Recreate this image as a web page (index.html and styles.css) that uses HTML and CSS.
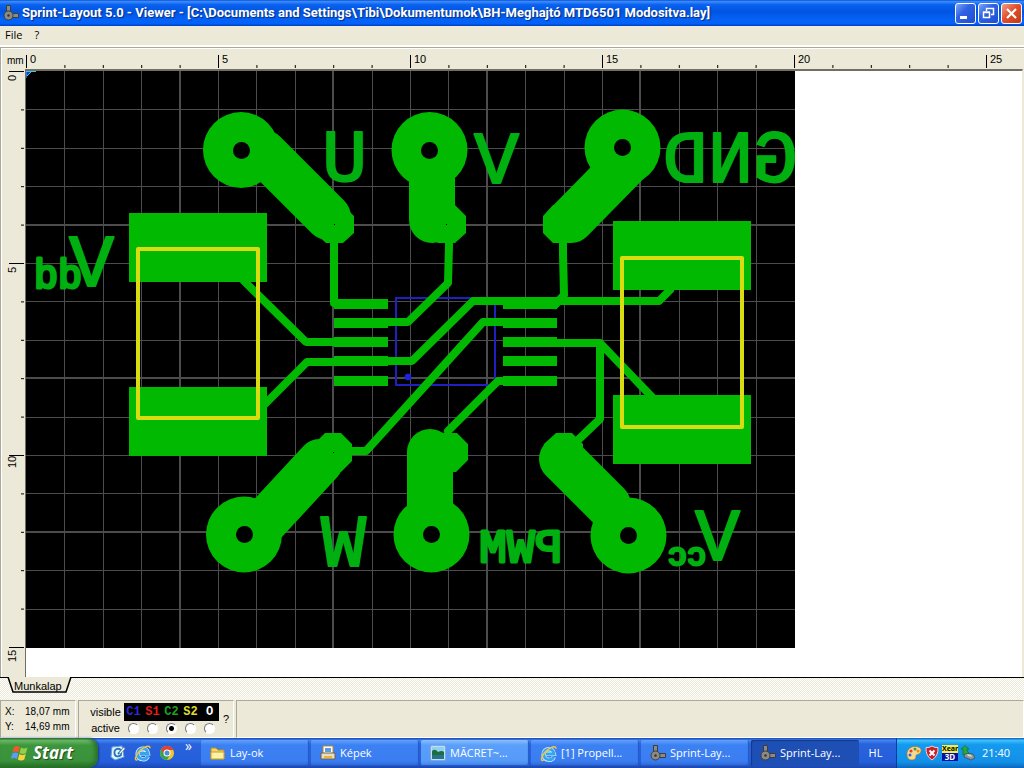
FILE: index.html
```
<!DOCTYPE html>
<html lang="hu">

<head>
    <meta charset="UTF-8">
    <meta name="viewport" content="width=device-width, initial-scale=1.0">
    <title>Sprint-Layout 5.0 - Viewer</title>
    <link rel="stylesheet" href="styles.css">
</head>

<body>

    <svg class="defs" width="0" height="0">
        <symbol id="sprint" viewBox="0 0 16 16">
            <path d="M8 8.500h7.500v4H8z" fill="#8b8b85" stroke="#3d3d3d" />
            <path d="M3.500.5h4V8h-4z" fill="#8b8b85" stroke="#3d3d3d" />
            <circle cx="5.500" cy="10.500" r="4.500" fill="#8b8b85" stroke="#3d3d3d" />
            <circle cx="5.500" cy="10.500" r="1.200" fill="#333" />
        </symbol>
        <symbol id="ie" viewBox="0 0 18 18">
            <path d="M14.500 12.500C13 17 4.500 17 3.800 10 3.500 3.500 13.500 1.500 14.800 9.500H6" fill="none" stroke="#d9f1ff" stroke-width="4.500" />
            <path d="M14.500 12.500C13 17 4.500 17 3.800 10 3.500 3.500 13.500 1.500 14.800 9.500H6" fill="none" stroke="#35a5ee" stroke-width="3" />
            <path d="M4 16C0 18 1 12 6 7s11-7 11-3" fill="none" stroke="#f2c446" stroke-width="1.600" />
        </symbol>
    </svg>

    <header class="titlebar">
        <svg class="app-icon" width="16" height="16"><use href="#sprint" /></svg>
        <h1>Sprint-Layout 5.0 - Viewer - [C:\Documents and Settings\Tibi\Dokumentumok\BH-Meghajtó MTD6501 Modositva.lay]</h1>
        <div class="win-btns">
            <button class="win-btn" aria-label="Minimize"><svg width="19" height="19"><path d="M4 12h7v3H4z" fill="#fff" /></svg></button>
            <button class="win-btn" aria-label="Restore"><svg width="19" height="19"><path d="M7.500 7V4.500h7v6H12M7 4.500h8M4.500 8.500h6v5h-6zM4 8h7" fill="none" stroke="#fff" stroke-width="1.500" /></svg></button>
            <button class="win-btn close" aria-label="Close"><svg width="19" height="19"><path d="M5 5l9 9M14 5l-9 9" stroke="#fff" stroke-width="2.200" /></svg></button>
        </div>
    </header>

    <nav class="menubar">
        <button>File</button>
        <button>?</button>
    </nav>

    <main class="workspace">
        <div class="ruler-top">
            <span class="unit">mm</span>
            <svg class="ruler-x" height="23">
                <defs>
                    <pattern id="tickX" width="38.400" height="23" patternUnits="userSpaceOnUse">
                        <path d="M0 17h1v3H0z" />
                    </pattern>
                    <pattern id="majorX" width="192" height="23" patternUnits="userSpaceOnUse">
                        <path d="M0 7h1v13H0z" />
                    </pattern>
                </defs>
                <rect width="100%" height="23" fill="url(#tickX)" />
                <rect width="100%" height="23" fill="url(#majorX)" />
                <text x="4" y="15">0</text>
                <text x="196" y="15">5</text>
                <text x="388" y="15">10</text>
                <text x="580" y="15">15</text>
                <text x="772" y="15">20</text>
                <text x="964" y="15">25</text>
            </svg>
        </div>
        <div class="sheet-row">
            <svg class="ruler-y" width="24">
                <defs>
                    <pattern id="tickY" width="24" height="38.400" patternUnits="userSpaceOnUse">
                        <path d="M20 0h3v1h-3z" />
                    </pattern>
                    <pattern id="majorY" width="24" height="192" patternUnits="userSpaceOnUse">
                        <path d="M8 0h15v1H8z" />
                    </pattern>
                </defs>
                <rect width="24" height="100%" fill="url(#tickY)" />
                <rect width="24" height="100%" fill="url(#majorY)" />
                <text transform="translate(15 10) rotate(-90)">0</text>
                <text transform="translate(15 202) rotate(-90)">5</text>
                <text transform="translate(15 397) rotate(-90)">10</text>
                <text transform="translate(15 591) rotate(-90)">15</text>
            </svg>
            <div class="canvas">
                <svg class="board" width="769" height="577" viewBox="26 71 769 577">
                    <rect x="26" y="71" width="769" height="577" fill="#000" />

                    <!-- grid, every fourth line is heavier -->
                    <g class="grid">
                        <path d="M64.500 71v577M103.500 71v577M141.500 71v577M218.500 71v577M256.500 71v577M295.500 71v577M372.500 71v577M410.500 71v577M448.500 71v577M525.500 71v577M564.500 71v577M602.500 71v577M679.500 71v577M717.500 71v577M756.500 71v577" />
                        <path d="M26 109.500h769M26 148.500h769M26 186.500h769M26 263.500h769M26 301.500h769M26 340.500h769M26 417.500h769M26 455.500h769M26 493.500h769M26 570.500h769M26 609.500h769" />
                        <path class="heavy" d="M180 71v577M333 71v577M487 71v577M640 71v577M26 225h769M26 378h769M26 532h769" />
                    </g>

                    <!-- S1 -->
                    <g class="silk-blue">
                        <rect x="396" y="298" width="99" height="87" />
                        <circle cx="408" cy="377" r="3" />
                    </g>

                    <!-- C2 pads -->
                    <g class="copper">
                        <circle cx="241" cy="150" r="38" />
                        <circle cx="429.500" cy="150" r="38" />
                        <circle cx="622.500" cy="147.500" r="38" />
                        <circle cx="244" cy="534.500" r="38" />
                        <circle cx="431.500" cy="534.500" r="38" />
                        <circle cx="628.500" cy="535.500" r="38" />
                        <path d="M326 205h17l11 11v17l-11 10h-17l-11-10v-17zM438 205h17l11 11v17l-11 10h-17l-11-10v-17zM553 205h18l11 11v17l-11 10h-18l-10-10v-17zM325 433h16l11 11v17l-11 11h-16l-11-11v-17zM440 433h17l11 11v16l-12 12h-16l-11-11v-17zM556 433h16l11 11v17l-11 11h-16l-12-11v-17z" />
                        <path d="M129 213h138v69H129zM129 387h138v69H129zM613 221h138v69H613zM613 395h138v69H613z" />
                        <path d="M334 299h54v10h-54zM334 318h54v10h-54zM334 337h54v10h-54zM334 356h54v10h-54zM334 376h54v10h-54z" />
                        <path d="M503 299h54v10h-54zM503 318h54v10h-54zM503 337h54v10h-54zM503 356h54v10h-54zM503 376h54v10h-54z" />
                    </g>

                    <!-- C2 tracks -->
                    <g class="track wide">
                        <path d="M264 153l64 64M432 150v70M625 165l-54 55M258 529l62-67M430 534v-82M562 459l46 46" />
                    </g>
                    <g class="track">
                        <path d="M334 230v73h20M449 235v10l-1 38-40 39h-20M563 235v20l1 40-9 10" />
                        <path d="M388 361h24l61-60h186l11-11M334 342h-28l-62-61M334 362h-27l-42 42" />
                        <path d="M503 322h-20L366 451h-16M557 343h43l52 54M600 345v74l-23 22M503 381h-5l-50 50" />
                    </g>
                    <g class="holes">
                        <circle cx="241.500" cy="150.500" r="8.500" />
                        <circle cx="429.500" cy="150.500" r="8.500" />
                        <circle cx="622.500" cy="147.500" r="8.500" />
                        <circle cx="244.500" cy="534.500" r="8.500" />
                        <circle cx="431.500" cy="534.500" r="8.500" />
                        <circle cx="628.500" cy="535.500" r="8.500" />
                        <path d="M334 224h1v1h-1zM446 224h1v1h-1zM333 452h1v1h-1z" />
                    </g>

                    <!-- captions on the bottom side read mirrored -->
                    <g class="caption">
                        <text transform="translate(367 181) scale(-1 1)">U</text>
                        <text transform="translate(519 183) scale(-1 1)">V</text>
                        <text transform="translate(798 182) scale(-1 1)">GND</text>
                        <text transform="translate(114 286) scale(-1 1)">V</text>
                        <text class="sub" transform="translate(82 288) scale(-1 1)">dd</text>
                        <text transform="translate(366 566) scale(-1 1)">W</text>
                        <text class="pwm" transform="translate(562 562) scale(-1 1)">PWM</text>
                        <text transform="translate(740 560) scale(-1 1)">V</text>
                        <text class="sub-c" transform="translate(706 565) scale(-1 1)">cc</text>
                    </g>

                    <!-- S2 -->
                    <g class="silk-yellow">
                        <rect x="138" y="249" width="120" height="169" />
                        <rect x="622" y="258" width="120" height="169" />
                    </g>
                    <path d="M26 71h6l-6 6z" fill="#1a3fd0" />
                    <path d="M26 78v-6.500h10M27 76l5-5" fill="none" stroke="#39c8ee" />
                </svg>
            </div>
        </div>
    </main>

    <div class="tabs">
        <button class="tab">
            <svg class="tab-shape" width="66" height="18"><path d="M1 0l5 15h53l5-15" fill="#ece9d8" stroke="#000" stroke-width="1.500" /></svg>
            <span>Munkalap</span>
        </button>
    </div>

    <footer class="status">
        <dl class="panel coords">
            <dt>X:</dt>
            <dd>18,07 mm</dd>
            <dt>Y:</dt>
            <dd>14,69 mm</dd>
        </dl>
        <div class="panel layers">
            <div class="layer-rows">
                <div class="layer-row">
                    <span class="caption-cell">visible</span>
                    <div class="layer-names">
                        <button class="c1">C1</button>
                        <button class="s1">S1</button>
                        <button class="c2">C2</button>
                        <button class="s2">S2</button>
                        <button class="o">O</button>
                    </div>
                </div>
                <div class="layer-row">
                    <span class="caption-cell">active</span>
                    <div class="layer-radios">
                        <input type="radio" name="layer" aria-label="C1">
                        <input type="radio" name="layer" aria-label="S1">
                        <input type="radio" name="layer" aria-label="C2" checked>
                        <input type="radio" name="layer" aria-label="S2">
                        <input type="radio" name="layer" aria-label="O">
                    </div>
                </div>
            </div>
            <button class="help">?</button>
        </div>
        <div class="panel rest"></div>
    </footer>

    <div class="taskbar">
        <button class="start">
            <svg width="20" height="20" viewBox="0 0 20 20">
                <path d="M4 4q3-2 6 0L8.500 9.500q-3-2-6 0z" fill="#f05a28" />
                <path d="M11 4.500q3 2 6.500 0L16 10q-3 2-6.500 0z" fill="#8fd14a" />
                <path d="M2.300 10.500q3-2 6 0L7 16q-3-2-6.200 0z" fill="#5c9cf5" />
                <path d="M9.300 11q3 2 6.500 0l-1.500 5.500q-3 2-6.500 0z" fill="#fbd13c" />
            </svg>
            <span>Start</span>
        </button>
        <div class="quick">
            <button aria-label="Desktop">
                <svg width="16" height="18" viewBox="0 0 16 18"><path d="M2 3l10-1 2 11-9 3-4-3z" fill="#e8f4fc" stroke="#5fa5d8" /><path d="M11 6C7 3 4 6 4.500 9.500S9 13 11 11V7l-3 3" fill="none" stroke="#2478c0" stroke-width="1.800" /><path d="M9 9l5-6 1 2-5 5z" fill="#fff" stroke="#666" stroke-width=".5" /></svg>
            </button>
            <button aria-label="Internet Explorer"><svg width="17" height="18"><use href="#ie" /></svg></button>
            <button aria-label="Chrome">
                <svg width="16" height="18" viewBox="0 0 16 18"><circle cx="8" cy="9" r="7" fill="#f4c62c" /><path d="M2 5.500A7 7 0 0 1 14.500 6H8L5 11z" fill="#de4332" /><path d="M2 5.500A7 7 0 0 0 8 16l3-5H6z" fill="#35a34c" /><circle cx="8" cy="9" r="3.500" fill="#fff" /><circle cx="8" cy="9" r="2.500" fill="#4b8de0" /></svg>
            </button>
            <button class="more">»</button>
        </div>
        <div class="tasks">
            <button class="task">
                <svg width="16" height="16"><path d="M1 3h5l2 2h6v9H1z" fill="#f5d667" stroke="#b98a1d" /><path d="M1 14V7h13v7z" fill="#fff2a0" stroke="#c89c30" /></svg>
                <span>Lay-ok</span>
            </button>
            <button class="task">
                <svg width="16" height="16"><path d="M3 1h10v8H3z" fill="#fff" stroke="#b78b2f" /><path d="M5 3h6v4H5z" fill="#5b9be0" /><path d="M1 8h14v6H1z" fill="#e3dfca" stroke="#75603c" /><path d="M4 11h8v2H4z" fill="#e7b43d" /></svg>
                <span>Képek</span>
            </button>
            <button class="task lit">
                <svg width="16" height="16"><path d="M1 1h14v14H1z" fill="#fff" stroke="#9bb7ce" /><path d="M2 2h12v7H2z" fill="#8ed1f6" /><path d="M2 6q3-3 6 1 4-2 6 0v4H2z" fill="#1e6e3b" /><path d="M2 10h12v4H2z" fill="#247394" /></svg>
                <span>MĂCRET~...</span>
            </button>
            <button class="task">
                <svg width="17" height="17"><use href="#ie" /></svg>
                <span>[1] Propell...</span>
            </button>
            <button class="task">
                <svg width="16" height="16"><use href="#sprint" /></svg>
                <span>Sprint-Lay...</span>
            </button>
            <button class="task pressed">
                <svg width="16" height="16"><use href="#sprint" /></svg>
                <span>Sprint-Lay...</span>
            </button>
        </div>
        <button class="lang">HL</button>
        <div class="tray">
            <svg width="16" height="16"><path d="M1 10C0 3 8 0 12 2c4 1 4 5 1 7-2 1-3 0-3 2s-1 4-4 4-5-2-5-5z" fill="#f5d98e" stroke="#a3773b" stroke-width=".7" /><circle cx="5" cy="6" r="1.600" fill="#e2402a" /><circle cx="9" cy="4" r="1.500" fill="#3b9a4c" /><circle cx="4" cy="10" r="1.500" fill="#3a64d0" /><circle cx="12" cy="6" r="1.500" fill="#f08a20" /></svg>
            <svg width="16" height="16"><path d="M8 1q3 2 6 1.500Q14.500 11 8 15 1.500 11 2 2.500 5 3 8 1z" fill="#cb1f2b" stroke="#e8d7d9" /><path d="M5.500 5.500l5 5M10.500 5.500l-5 5" stroke="#fff" stroke-width="2" /></svg>
            <span class="xear"><b>Xear</b><b>3D</b></span>
            <svg width="16" height="16"><path d="M5 8l8 1 2 4-4 2-7-3z" fill="#8c979c" stroke="#37474b" stroke-width=".7" /><path d="M7 9l4 1 1 2-4-1z" fill="#d6dde0" /><path d="M3 10V4H1l4-3.500L9 4H7q0 3 2 4-5 1-6 2z" fill="#28a83a" stroke="#126a20" stroke-width=".6" /></svg>
            <time>21:40</time>
        </div>
    </div>

</body>

</html>
```
FILE: styles.css
```
html,
body {
    margin: 0;
    height: 100%;
}

body {
    display: flex;
    flex-direction: column;
    overflow: hidden;
    background: #ece9d8;
    color: #000;
    font-family: "Liberation Sans", sans-serif;
    font-size: 11px;
    line-height: 14px;
}

button {
    margin: 0;
    padding: 0;
    border: 0;
    background: none;
    color: inherit;
    font: inherit;
}

svg {
    display: block;
    flex: none;
}

.defs {
    position: absolute;
}

/* title bar */

.titlebar {
    display: flex;
    align-items: center;
    flex: none;
    height: 26px;
    padding: 0 2px 0 3px;
    box-sizing: border-box;
    background: linear-gradient(#0a50d0 0, #3b8cff 6%, #0a62ee 18%, #0054e3 45%, #0562f5 75%, #0262fa 90%, #0040c0 100%);
}

.titlebar h1 {
    flex: 1;
    margin: 0 0 0 3px;
    overflow: hidden;
    white-space: nowrap;
    color: #fff;
    font-family: Roboto, sans-serif;
    font-size: 13px;
    font-weight: 700;
    line-height: 20px;
    text-shadow: 1px 1px 1px #0a2a80;
}

.win-btns {
    display: flex;
    gap: 2px;
}

.win-btn {
    width: 21px;
    height: 21px;
    box-sizing: border-box;
    border: 1px solid #fff;
    border-radius: 3px;
    background: linear-gradient(135deg, #7fa6f5, #2f62e4 40%, #1e4fd0);
}

.win-btn.close {
    background: linear-gradient(135deg, #f0a088, #e0502c 45%, #c23a14);
}

/* menu */

.menubar {
    display: flex;
    flex: none;
    gap: 12px;
    height: 21px;
    padding: 0 5px 2px;
    box-sizing: border-box;
    border-bottom: 2px solid #fff;
    font-family: "Open Sans", sans-serif;
}

/* rulers and sheet */

.workspace {
    display: flex;
    flex: 1;
    flex-direction: column;
    min-height: 0;
    border-top: 1px solid #aca899;
    border-left: 1px solid #aca899;
    box-shadow: inset 1px 1px 0 #fff;
}

.ruler-top {
    display: flex;
    flex: none;
}

.unit {
    width: 25px;
    padding: 6px 0 0 6px;
    box-sizing: border-box;
    font-size: 10px;
}

.ruler-x {
    flex: 1;
    min-width: 0;
    font-size: 11px;
}

.sheet-row {
    display: flex;
    flex: 1;
    min-height: 0;
}

.ruler-y {
    height: 100%;
    font-size: 11px;
}

.canvas {
    flex: 1;
    min-width: 0;
    overflow: hidden;
    margin-right: 1px;
    border-top: 2px solid #716f64;
    border-left: 1px solid #716f64;
    border-right: 1px solid #ece9d8;
    margin-top: -2px;
    background: #fff;
}

/* board */

.grid path {
    fill: none;
    stroke: #4c4c4c;
    stroke-width: 1;
}

.grid .heavy {
    stroke-width: 2;
}

.silk-blue rect {
    fill: none;
    stroke: #2020c0;
    stroke-width: 2;
}

.silk-blue circle {
    fill: #2020e0;
    stroke: #2020e0;
}

.copper {
    fill: #00b900;
}

.track {
    fill: none;
    stroke: #00b900;
    stroke-width: 8;
    stroke-linecap: round;
    stroke-linejoin: round;
}

.track.wide {
    stroke-width: 46;
}

.holes {
    fill: #000;
}

.caption {
    fill: #00b010;
    stroke: #00b010;
    stroke-width: 2;
    stroke-linejoin: round;
    font-family: "Liberation Mono", monospace;
    font-size: 75px;
}

.caption .sub {
    font-size: 40px;
    stroke-width: 3;
}

.caption .sub-c {
    font-size: 32px;
    stroke-width: 3;
}

.caption .pwm {
    font-size: 46px;
    stroke-width: 3;
}

.silk-yellow rect {
    fill: none;
    stroke: #d8dc10;
    stroke-width: 4;
    stroke-linejoin: round;
}

/* sheet tabs */

.tabs {
    flex: none;
    height: 22px;
    padding-left: 7px;
    border-top: 1px solid #000;
    background: repeating-conic-gradient(#ece9d8 0 25%, #fff 0 50%) 0 0 / 2px 2px;
}

.tab {
    position: relative;
    padding: 1px 8px 0 7px;
}

.tab-shape {
    position: absolute;
    top: -1px;
    left: 0;
}

.tab span {
    position: relative;
}

/* status bar */

.status {
    display: flex;
    flex: none;
    gap: 2px;
    height: 38px;
}

.panel {
    display: flex;
    box-sizing: border-box;
    margin: 0;
    border: 1px solid #fff;
    border-top-color: #aca899;
    border-left-color: #aca899;
}

.coords {
    display: grid;
    grid-template-columns: 20px 1fr;
    align-content: center;
    row-gap: 1px;
    width: 76px;
    padding-left: 4px;
    font-size: 10px;
}

.coords dd {
    margin: 0;
    white-space: nowrap;
}

.layers {
    align-items: center;
    gap: 4px;
    width: 156px;
    padding-left: 8px;
}

.layer-row {
    display: flex;
    align-items: center;
}

.caption-cell {
    width: 37px;
    text-align: center;
}

.layer-names,
.layer-radios {
    display: flex;
    width: 95px;
}

.layer-names {
    height: 18px;
    background: #000;
    font-family: "Liberation Mono", monospace;
    font-size: 12px;
    font-weight: 700;
}

.layer-names button {
    flex: 1;
}

.c1 {
    color: #2a2ad0;
}

.s1 {
    color: #e01c1c;
}

.c2 {
    color: #1ea01e;
}

.s2 {
    color: #dcdc30;
}

.o {
    color: #fff;
}

.layer-radios input {
    appearance: none;
    width: 11px;
    height: 11px;
    margin: 2px 4px;
    box-sizing: border-box;
    border: 1px solid #fff;
    border-top-color: #777;
    border-left-color: #777;
    border-radius: 50%;
    background: #fff;
}

.layer-radios input:checked {
    background: radial-gradient(circle, #000 2px, #fff 3px);
}

.rest {
    flex: 1;
}

/* taskbar */

.taskbar {
    display: flex;
    flex: none;
    height: 30px;
    background: linear-gradient(#1c46b0 0, #3f86f2 8%, #2a62da 20%, #245edb 80%, #1b47ad 100%);
    color: #fff;
    font-family: "Open Sans", sans-serif;
}

.start {
    display: flex;
    align-items: center;
    gap: 3px;
    width: 98px;
    padding-left: 10px;
    border-radius: 0 10px 10px 0;
    background: linear-gradient(#2a6e2a 0, #6fbd6c 8%, #3c963c 24%, #3a923a 75%, #246c24 100%);
    box-shadow: inset -3px 0 4px #2b6e2b, 1px 0 2px #143a90;
    font-size: 17px;
    font-style: italic;
    font-weight: 700;
    text-shadow: 1px 1px 1px #1b4a1b;
}

.quick {
    display: flex;
    align-items: center;
    gap: 8px;
    width: 103px;
    padding-left: 12px;
    box-sizing: border-box;
}

.more {
    align-self: flex-start;
    padding-left: 2px;
    font-size: 14px;
    line-height: 16px;
}

.tasks {
    display: flex;
    flex: 1;
    align-items: center;
    gap: 2px;
    min-width: 0;
}

.task {
    display: flex;
    align-items: center;
    flex: 0 1 108px;
    gap: 4px;
    height: 26px;
    padding-left: 9px;
    box-sizing: border-box;
    border-radius: 2px;
    background: linear-gradient(#62a0fa, #3c81f3 20%, #3a7df0 80%, #2e68d8);
    box-shadow: inset -1px -1px 1px #2458c4;
    white-space: nowrap;
}

.task.lit {
    background: linear-gradient(#8abefc, #5a9ffb 20%, #569af8 80%, #3f82e6);
}

.task.pressed {
    background: #1e4fb5;
    box-shadow: inset 1px 1px 1px #133886;
}

.lang {
    width: 36px;
    padding-right: 5px;
}

.tray {
    display: flex;
    align-items: center;
    gap: 2px;
    width: 128px;
    padding-left: 9px;
    box-sizing: border-box;
    border-left: 1px solid #0a3a9c;
    background: linear-gradient(#0c59b9 0, #3cc0fa 8%, #149aee 22%, #1290e8 80%, #0c66bc 100%);
}

.xear {
    display: flex;
    flex-direction: column;
    width: 16px;
    background: #f2ef4a;
    color: #000;
    font-size: 7px;
    line-height: 8px;
    text-align: center;
}

.xear b + b {
    background: #0a10a0;
    color: #fff;
    font-size: 8px;
}

.tray time {
    margin-left: 4px;
}
```
